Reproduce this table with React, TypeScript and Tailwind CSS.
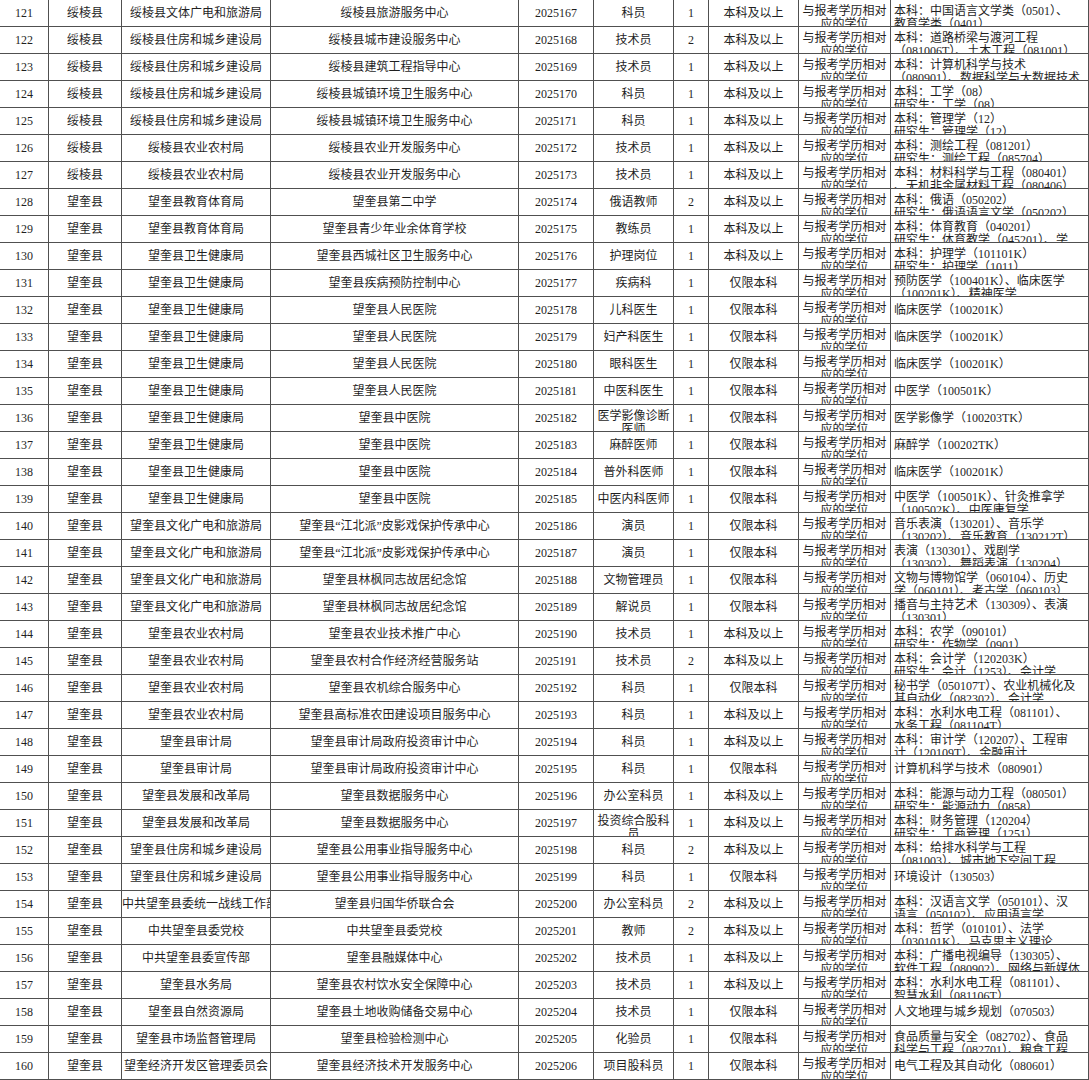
// Recruitment post table, rows 121-160.
type Lines = string | [string, string]

interface Post {
  no: number
  county: string
  dept: string
  unit: string
  code: string
  title: Lines
  count: number
  edu: string
  major: Lines
}

const DEGREE: Lines = ['与报考学历相对', '应的学位']

const SL = '绥棱县'
const WK = '望奎县'
const WK_HEALTH = '望奎县卫生健康局'
const WK_FARM = '望奎县农业农村局'
const WK_CULTURE = '望奎县文化广电和旅游局'
const SL_BUILD = '绥棱县住房和城乡建设局'
const WK_BUILD = '望奎县住房和城乡建设局'
const PIYING = '望奎县“江北派”皮影戏保护传承中心'

const posts: Post[] = [
  { no: 121, county: SL, dept: '绥棱县文体广电和旅游局', unit: '绥棱县旅游服务中心', code: '2025167', title: '科员', count: 1, edu: '本科及以上', major: ['本科：中国语言文学类（0501）、', '教育学类（0401）'] },
  { no: 122, county: SL, dept: SL_BUILD, unit: '绥棱县城市建设服务中心', code: '2025168', title: '技术员', count: 2, edu: '本科及以上', major: ['本科：道路桥梁与渡河工程', '（081006T）、土木工程（081001）'] },
  { no: 123, county: SL, dept: SL_BUILD, unit: '绥棱县建筑工程指导中心', code: '2025169', title: '技术员', count: 1, edu: '本科及以上', major: ['本科：计算机科学与技术', '（080901）、数据科学与大数据技术'] },
  { no: 124, county: SL, dept: SL_BUILD, unit: '绥棱县城镇环境卫生服务中心', code: '2025170', title: '科员', count: 1, edu: '本科及以上', major: ['本科：工学（08）', '研究生：工学（08）'] },
  { no: 125, county: SL, dept: SL_BUILD, unit: '绥棱县城镇环境卫生服务中心', code: '2025171', title: '科员', count: 1, edu: '本科及以上', major: ['本科：管理学（12）', '研究生：管理学（12）'] },
  { no: 126, county: SL, dept: '绥棱县农业农村局', unit: '绥棱县农业开发服务中心', code: '2025172', title: '技术员', count: 1, edu: '本科及以上', major: ['本科：测绘工程（081201）', '研究生：测绘工程（085704）'] },
  { no: 127, county: SL, dept: '绥棱县农业农村局', unit: '绥棱县农业开发服务中心', code: '2025173', title: '技术员', count: 1, edu: '本科及以上', major: ['本科：材料科学与工程（080401）', '、无机非金属材料工程（080406）'] },
  { no: 128, county: WK, dept: '望奎县教育体育局', unit: '望奎县第二中学', code: '2025174', title: '俄语教师', count: 2, edu: '本科及以上', major: ['本科：俄语（050202）', '研究生：俄语语言文学（050202）'] },
  { no: 129, county: WK, dept: '望奎县教育体育局', unit: '望奎县青少年业余体育学校', code: '2025175', title: '教练员', count: 1, edu: '本科及以上', major: ['本科：体育教育（040201）', '研究生：体育教学（045201）、学'] },
  { no: 130, county: WK, dept: WK_HEALTH, unit: '望奎县西城社区卫生服务中心', code: '2025176', title: '护理岗位', count: 1, edu: '本科及以上', major: ['本科：护理学（101101K）', '研究生：护理学（1011）'] },
  { no: 131, county: WK, dept: WK_HEALTH, unit: '望奎县疾病预防控制中心', code: '2025177', title: '疾病科', count: 1, edu: '仅限本科', major: ['预防医学（100401K）、临床医学', '（100201K）、精神医学'] },
  { no: 132, county: WK, dept: WK_HEALTH, unit: '望奎县人民医院', code: '2025178', title: '儿科医生', count: 1, edu: '仅限本科', major: '临床医学（100201K）' },
  { no: 133, county: WK, dept: WK_HEALTH, unit: '望奎县人民医院', code: '2025179', title: '妇产科医生', count: 1, edu: '仅限本科', major: '临床医学（100201K）' },
  { no: 134, county: WK, dept: WK_HEALTH, unit: '望奎县人民医院', code: '2025180', title: '眼科医生', count: 1, edu: '仅限本科', major: '临床医学（100201K）' },
  { no: 135, county: WK, dept: WK_HEALTH, unit: '望奎县人民医院', code: '2025181', title: '中医科医生', count: 1, edu: '仅限本科', major: '中医学（100501K）' },
  { no: 136, county: WK, dept: WK_HEALTH, unit: '望奎县中医院', code: '2025182', title: ['医学影像诊断', '医师'], count: 1, edu: '仅限本科', major: '医学影像学（100203TK）' },
  { no: 137, county: WK, dept: WK_HEALTH, unit: '望奎县中医院', code: '2025183', title: '麻醉医师', count: 1, edu: '仅限本科', major: '麻醉学（100202TK）' },
  { no: 138, county: WK, dept: WK_HEALTH, unit: '望奎县中医院', code: '2025184', title: '普外科医师', count: 1, edu: '仅限本科', major: '临床医学（100201K）' },
  { no: 139, county: WK, dept: WK_HEALTH, unit: '望奎县中医院', code: '2025185', title: '中医内科医师', count: 1, edu: '仅限本科', major: ['中医学（100501K）、针灸推拿学', '（100502K）、中医康复学'] },
  { no: 140, county: WK, dept: WK_CULTURE, unit: PIYING, code: '2025186', title: '演员', count: 1, edu: '仅限本科', major: ['音乐表演（130201）、音乐学', '（130202）、音乐教育（130212T）'] },
  { no: 141, county: WK, dept: WK_CULTURE, unit: PIYING, code: '2025187', title: '演员', count: 1, edu: '仅限本科', major: ['表演（130301）、戏剧学', '（130302）、舞蹈表演（130204）'] },
  { no: 142, county: WK, dept: WK_CULTURE, unit: '望奎县林枫同志故居纪念馆', code: '2025188', title: '文物管理员', count: 1, edu: '仅限本科', major: ['文物与博物馆学（060104）、历史', '学（060101）、考古学（060103）'] },
  { no: 143, county: WK, dept: WK_CULTURE, unit: '望奎县林枫同志故居纪念馆', code: '2025189', title: '解说员', count: 1, edu: '仅限本科', major: ['播音与主持艺术（130309）、表演', '（130301）'] },
  { no: 144, county: WK, dept: WK_FARM, unit: '望奎县农业技术推广中心', code: '2025190', title: '技术员', count: 1, edu: '本科及以上', major: ['本科：农学（090101）', '研究生：作物学（0901）'] },
  { no: 145, county: WK, dept: WK_FARM, unit: '望奎县农村合作经济经营服务站', code: '2025191', title: '技术员', count: 2, edu: '本科及以上', major: ['本科：会计学（120203K）', '研究生：会计（1253）、会计学'] },
  { no: 146, county: WK, dept: WK_FARM, unit: '望奎县农机综合服务中心', code: '2025192', title: '科员', count: 1, edu: '仅限本科', major: ['秘书学（050107T）、农业机械化及', '其自动化（082302）、会计学'] },
  { no: 147, county: WK, dept: WK_FARM, unit: '望奎县高标准农田建设项目服务中心', code: '2025193', title: '科员', count: 1, edu: '本科及以上', major: ['本科：水利水电工程（081101）、', '水务工程（081104T）'] },
  { no: 148, county: WK, dept: '望奎县审计局', unit: '望奎县审计局政府投资审计中心', code: '2025194', title: '科员', count: 1, edu: '本科及以上', major: ['本科：审计学（120207）、工程审', '计（120109T）、金融审计'] },
  { no: 149, county: WK, dept: '望奎县审计局', unit: '望奎县审计局政府投资审计中心', code: '2025195', title: '科员', count: 1, edu: '仅限本科', major: '计算机科学与技术（080901）' },
  { no: 150, county: WK, dept: '望奎县发展和改革局', unit: '望奎县数据服务中心', code: '2025196', title: '办公室科员', count: 1, edu: '本科及以上', major: ['本科：能源与动力工程（080501）', '研究生：能源动力（0858）'] },
  { no: 151, county: WK, dept: '望奎县发展和改革局', unit: '望奎县数据服务中心', code: '2025197', title: ['投资综合股科', '员'], count: 1, edu: '本科及以上', major: ['本科：财务管理（120204）', '研究生：工商管理（1251）'] },
  { no: 152, county: WK, dept: WK_BUILD, unit: '望奎县公用事业指导服务中心', code: '2025198', title: '科员', count: 2, edu: '本科及以上', major: ['本科：给排水科学与工程', '（081003）、城市地下空间工程'] },
  { no: 153, county: WK, dept: WK_BUILD, unit: '望奎县公用事业指导服务中心', code: '2025199', title: '科员', count: 1, edu: '仅限本科', major: '环境设计（130503）' },
  { no: 154, county: WK, dept: '中共望奎县委统一战线工作部', unit: '望奎县归国华侨联合会', code: '2025200', title: '办公室科员', count: 2, edu: '本科及以上', major: ['本科：汉语言文学（050101）、汉', '语言（050102）、应用语言学'] },
  { no: 155, county: WK, dept: '中共望奎县委党校', unit: '中共望奎县委党校', code: '2025201', title: '教师', count: 2, edu: '本科及以上', major: ['本科：哲学（010101）、法学', '（030101K）、马克思主义理论'] },
  { no: 156, county: WK, dept: '中共望奎县委宣传部', unit: '望奎县融媒体中心', code: '2025202', title: '技术员', count: 1, edu: '本科及以上', major: ['本科：广播电视编导（130305）、', '软件工程（080902）、网络与新媒体'] },
  { no: 157, county: WK, dept: '望奎县水务局', unit: '望奎县农村饮水安全保障中心', code: '2025203', title: '技术员', count: 1, edu: '本科及以上', major: ['本科：水利水电工程（081101）、', '智慧水利（081106T）'] },
  { no: 158, county: WK, dept: '望奎县自然资源局', unit: '望奎县土地收购储备交易中心', code: '2025204', title: '技术员', count: 1, edu: '仅限本科', major: '人文地理与城乡规划（070503）' },
  { no: 159, county: WK, dept: '望奎县市场监督管理局', unit: '望奎县检验检测中心', code: '2025205', title: '化验员', count: 1, edu: '仅限本科', major: ['食品质量与安全（082702）、食品', '科学与工程（082701）、粮食工程'] },
  { no: 160, county: WK, dept: '望奎经济开发区管理委员会', unit: '望奎县经济技术开发服务中心', code: '2025206', title: '项目股科员', count: 1, edu: '仅限本科', major: '电气工程及其自动化（080601）' },
]

function Cell({ value, left = false }: { value: Lines | number; left?: boolean }) {
  const base = `h-[27px] overflow-hidden border-b border-r border-[#505050] ${left ? 'pl-[3px] text-left' : 'text-center'}`

  if (Array.isArray(value)) {
    return (
      <div className={`${base} pt-[5px] leading-[13px]`}>
        {value.map((line) => (
          <div key={line} className="whitespace-nowrap">
            {line}
          </div>
        ))}
      </div>
    )
  }

  return <div className={`${base} whitespace-nowrap leading-[27px]`}>{value}</div>
}

function Row({ post }: { post: Post }) {
  return (
    <div className="grid grid-cols-[49px_73px_149px_248px_75px_80px_35px_90px_92px_198px]">
      <Cell value={post.no} />
      <Cell value={post.county} />
      <Cell value={post.dept} />
      <Cell value={post.unit} />
      <Cell value={post.code} />
      <Cell value={post.title} />
      <Cell value={post.count} />
      <Cell value={post.edu} />
      <Cell value={DEGREE} />
      <Cell value={post.major} left />
    </div>
  )
}

export default function App() {
  return (
    <div className="h-[1080px] w-[1089px] overflow-hidden bg-white font-['Liberation_Serif','Noto_Sans_CJK_SC',serif] text-[12px] text-[#1f1f1f]">
      {posts.map((post) => (
        <Row key={post.no} post={post} />
      ))}
    </div>
  )
}
